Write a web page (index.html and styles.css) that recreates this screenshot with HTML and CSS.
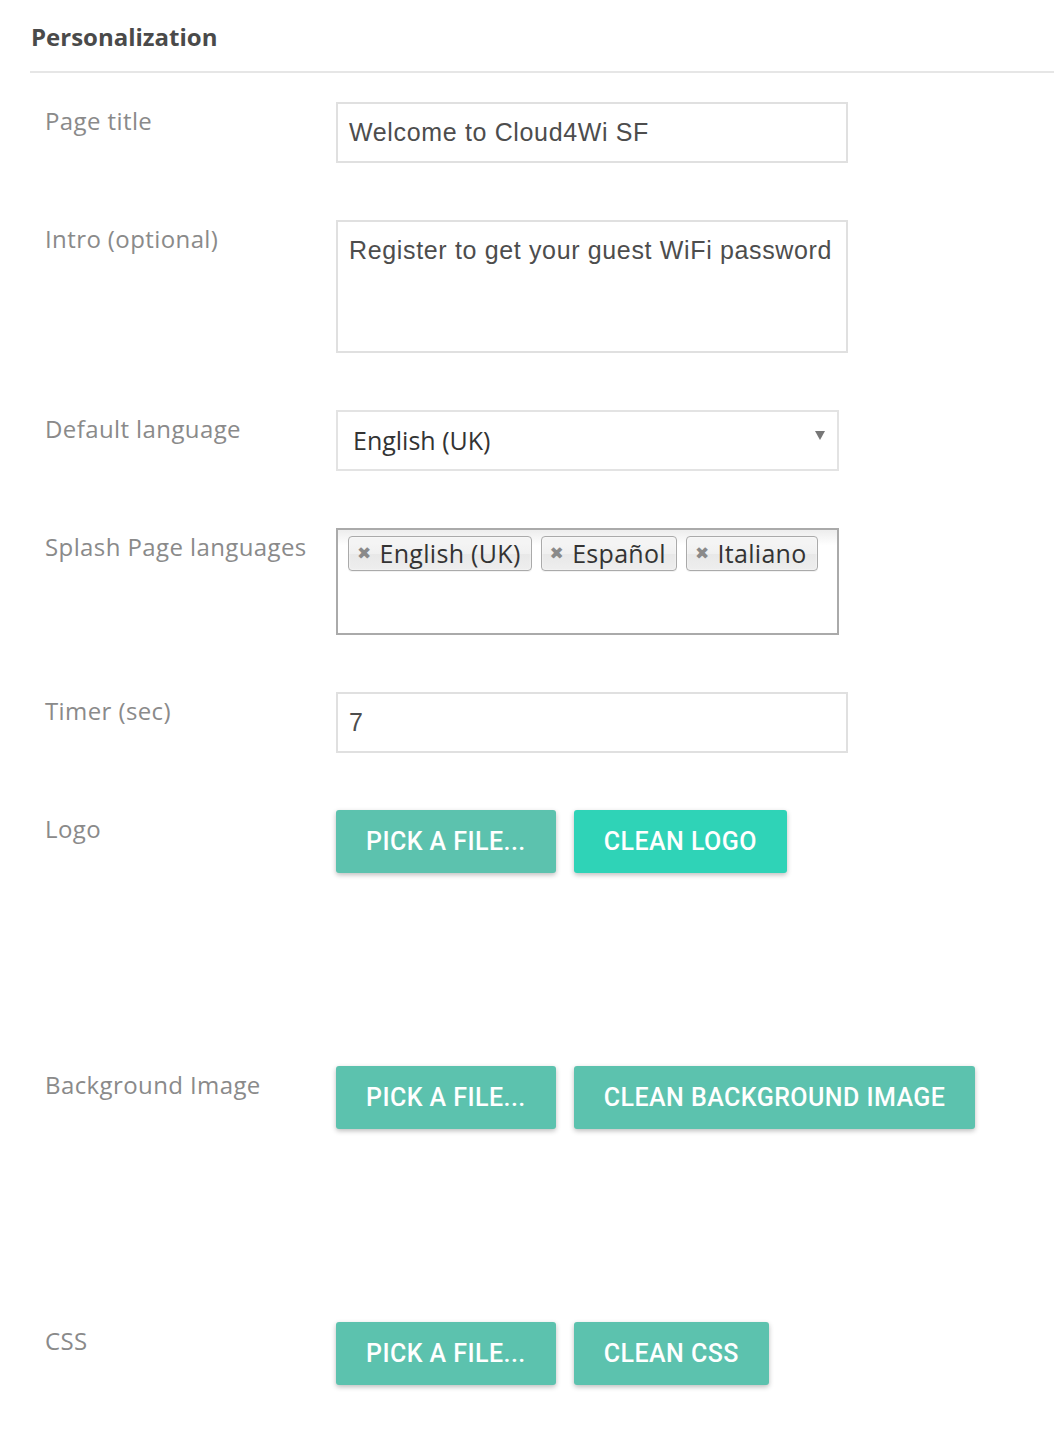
FILE: index.html
```html
<!DOCTYPE html>
<html lang="en">
<head>
  <meta charset="UTF-8" />
  <meta name="viewport" content="width=device-width, initial-scale=1.0"/>
  <title>Personalization</title>
  <link rel="stylesheet" href="styles.css">
</head>
<body>
  <h2 class="section-title">Personalization</h2>

  <div class="form">
    <div class="row">
      <label class="label">Page title</label>
      <div class="field">
        <div class="input">Welcome to Cloud4Wi SF</div>
      </div>
    </div>

    <div class="row">
      <label class="label">Intro (optional)</label>
      <div class="field">
        <div class="input textarea">Register to get your guest WiFi password</div>
      </div>
    </div>

    <div class="row">
      <label class="label">Default language</label>
      <div class="field">
        <div class="select">
          <span>English (UK)</span>
          <span class="caret"></span>
        </div>
      </div>
    </div>

    <div class="row">
      <label class="label">Splash Page languages</label>
      <div class="field">
        <div class="multi">
          <span class="tag"><span class="tag-x">&#10006;</span>English (UK)</span>
          <span class="tag"><span class="tag-x">&#10006;</span>Español</span>
          <span class="tag"><span class="tag-x">&#10006;</span>Italiano</span>
        </div>
      </div>
    </div>

    <div class="row">
      <label class="label">Timer (sec)</label>
      <div class="field">
        <div class="input">7</div>
      </div>
    </div>

    <div class="row row-file">
      <label class="label">Logo</label>
      <div class="field">
        <div class="buttons">
          <button class="btn">Pick a file...</button>
          <button class="btn btn-active">Clean logo</button>
        </div>
      </div>
    </div>

    <div class="row row-file">
      <label class="label">Background Image</label>
      <div class="field">
        <div class="buttons">
          <button class="btn">Pick a file...</button>
          <button class="btn">Clean background image</button>
        </div>
      </div>
    </div>

    <div class="row">
      <label class="label">CSS</label>
      <div class="field">
        <div class="buttons">
          <button class="btn">Pick a file...</button>
          <button class="btn">Clean CSS</button>
        </div>
      </div>
    </div>
  </div>
</body>
</html>
```

FILE: styles.css
```css
body {
  margin: 0;
  padding: 0 0 0 30px;
  background: #fff;
  font-family: "Open Sans", sans-serif;
  color: #333;
}
.section-title {
  margin: 0;
  padding: 21px 0 0 1px;
  height: 50px;
  box-sizing: content-box;
  font-size: 24px;
  font-weight: 700;
  line-height: 32px;
  color: #4a4a4a;
  border-bottom: 2px solid #e6e6e6;
}
.form {
  padding-top: 29px;
}
.row {
  display: flex;
  margin-bottom: 57px;
}
.row-file {
  margin-bottom: 193px;
}
.label {
  width: 306px;
  flex-shrink: 0;
  padding: 3px 0 0 15px;
  box-sizing: border-box;
  font-size: 24px;
  line-height: 32px;
  letter-spacing: 0.4px;
  color: #8a8a8a;
}
.field {
  flex: 1;
}
.input {
  width: 512px;
  height: 61px;
  box-sizing: border-box;
  border: 2px solid #e0e0e0;
  padding: 12px 11px;
  font-family: "Liberation Sans", Arial, sans-serif;
  font-size: 25px;
  line-height: 32px;
  letter-spacing: 0.65px;
  color: #4d4d4d;
  white-space: nowrap;
}
.textarea {
  height: 133px;
}
.select {
  display: flex;
  justify-content: space-between;
  width: 503px;
  height: 61px;
  box-sizing: border-box;
  border: 2px solid #e3e3e3;
  padding: 12px 12px 0 15px;
  font-size: 25px;
  line-height: 32px;
  color: #333;
}
.caret {
  width: 0;
  height: 0;
  margin-top: 7px;
  border-left: 5px solid transparent;
  border-right: 5px solid transparent;
  border-top: 9px solid #777;
}
.multi {
  display: flex;
  align-items: flex-start;
  gap: 9px;
  width: 503px;
  height: 107px;
  box-sizing: border-box;
  border: 2px solid #aaa;
  padding: 6px 10px;
  background: linear-gradient(#eee 1%, #fff 15%);
}
.tag {
  display: flex;
  align-items: center;
  height: 35px;
  box-sizing: border-box;
  padding: 0 10px 1px 8px;
  border: 1px solid #aaa;
  border-radius: 4px;
  background: linear-gradient(#f4f4f4 20%, #f0f0f0 50%, #e8e8e8 52%, #eee);
  box-shadow: 0 0 2px #fff inset, 0 1px 0 rgba(0, 0, 0, 0.05);
  font-size: 25px;
  line-height: 32px;
  letter-spacing: 0.3px;
  color: #333;
}
.tag-x {
  font-family: "DejaVu Sans", sans-serif;
  font-size: 17px;
  font-weight: 700;
  color: #8a8a8a;
  margin-right: 8px;
}
.buttons {
  display: flex;
  gap: 18px;
}
.btn {
  height: 63px;
  padding: 0 30px;
  border: none;
  border-radius: 3px;
  background-color: #5cc2ae;
  color: #fff;
  font-family: Roboto, sans-serif;
  font-size: 25px;
  font-weight: 500;
  letter-spacing: 0.45px;
  text-transform: uppercase;
  box-shadow: 0 2px 5px rgba(0, 0, 0, 0.26);
  cursor: pointer;
}
.btn-active {
  background-color: #2fd3b7;
}
```
